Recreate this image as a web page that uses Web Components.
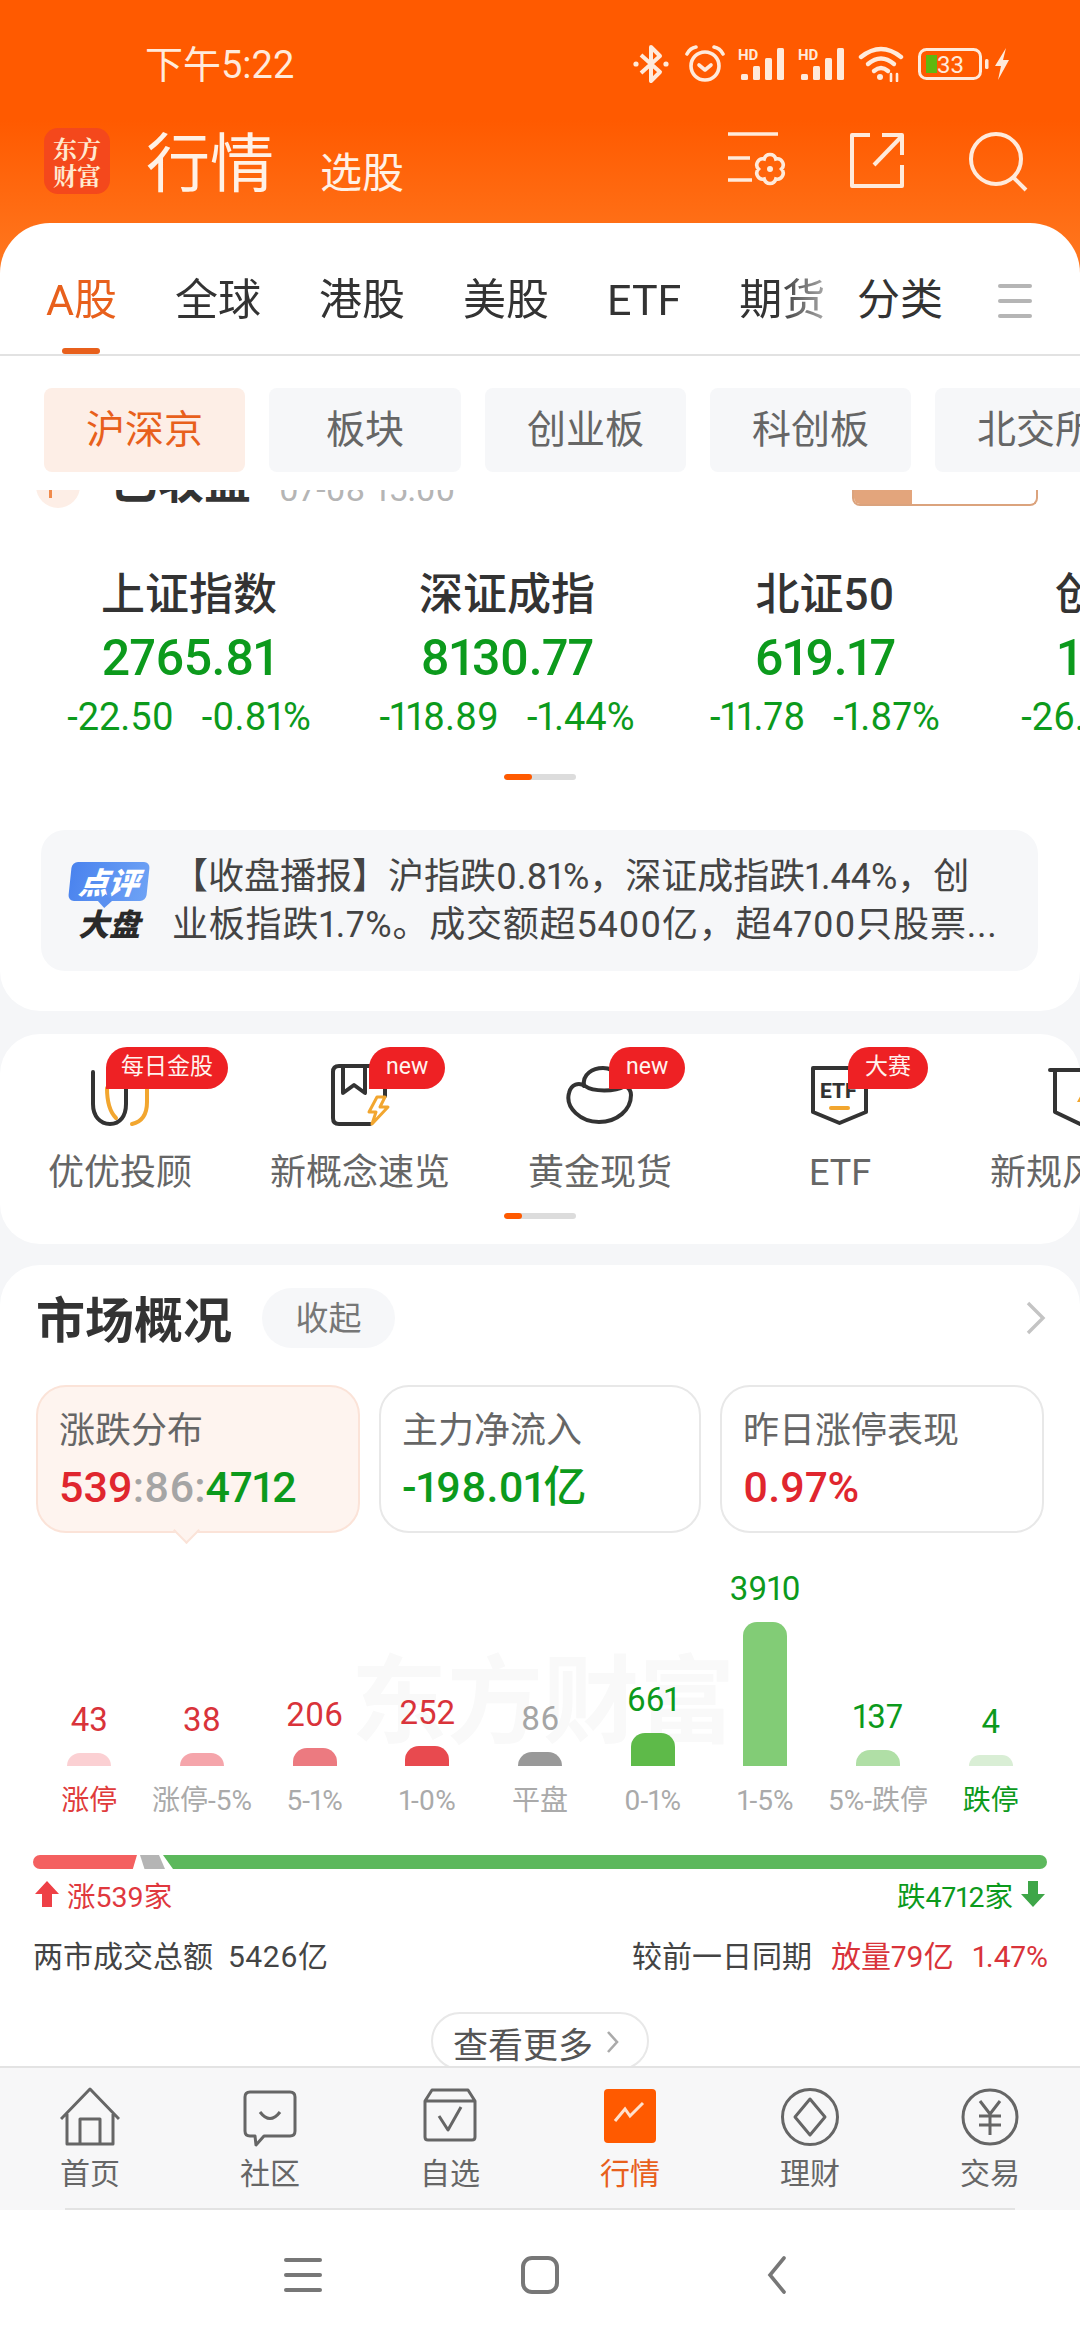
<!DOCTYPE html>
<html lang="zh">
<head>
<meta charset="utf-8">
<style>
  html, body { margin: 0; width: 1080px; height: 2340px; overflow: hidden; }
  body { font-family: Roboto, "Noto Sans CJK SC", sans-serif; color: #333; font-variant-numeric: proportional-nums; }
</style>
</head>
<body>
<market-app></market-app>

<script>
const RED = '#e0262e', GREEN = '#0c9a1c';

class StatusBar extends HTMLElement {
  constructor() { super(); this.attachShadow({ mode: 'open' }); }
  connectedCallback() {
    const signal = `<svg width="50" height="34" viewBox="0 0 50 34" fill="#ffeadb">
      <text x="0" y="13" font-size="15" font-weight="700" font-family="Roboto">HD</text>
      <rect x="3" y="27" width="7" height="6" rx="1.5"/><rect x="15" y="19" width="7" height="14" rx="1.5"/>
      <rect x="27" y="11" width="7" height="22" rx="1.5"/><rect x="39" y="1" width="7" height="32" rx="1.5"/></svg>`;
    this.shadowRoot.innerHTML = `
      <style>
        :host { display: flex; align-items: center; height: 128px; padding: 0 70px 0 145px; color: #ffeadb; }
        .time { font-size: 38px; flex: 1; padding-bottom: 6px; }
        .icons { display: flex; align-items: center; gap: 10px; }
      </style>
      <div class="time">下午5:22</div>
      <div class="icons">
        <svg width="36" height="40" viewBox="0 0 36 40" fill="none" stroke="#ffeadb" stroke-width="4" stroke-linejoin="round" style="margin-right:6px">
          <path d="M8 11 L27 28 L18 37 V3 L27 12 L8 29"/><circle cx="3" cy="20" r="2.6" fill="#ffeadb" stroke="none"/><circle cx="33" cy="20" r="2.6" fill="#ffeadb" stroke="none"/></svg>
        <svg width="40" height="38" viewBox="0 0 40 38" fill="none" stroke="#ffeadb" stroke-width="3.6" stroke-linecap="round" stroke-linejoin="round" style="margin-right:3px">
          <circle cx="20" cy="21" r="14"/><path d="M14 20 L20 25 L26 20"/><path d="M2 9 Q5 3 11 2 M38 9 Q35 3 29 2"/></svg>
        ${signal}
        ${signal}
        <svg width="46" height="36" viewBox="0 0 46 36" fill="none" stroke="#ffeadb" stroke-width="4.4" stroke-linecap="round" style="margin-right:4px">
          <path d="M3 11 Q23 -5 43 11"/><path d="M10 18 Q23 7 36 18"/><path d="M16 25 Q23 19 30 25"/><circle cx="22" cy="31" r="3" fill="#ffeadb" stroke="none"/>
          <path d="M33 28 V35 M39 28 V35" stroke-width="2.6"/></svg>
        <svg width="72" height="32" viewBox="0 0 72 32" fill="none">
          <rect x="1.5" y="1.5" width="61" height="29" rx="7" stroke="#ffeadb" stroke-width="3"/>
          <rect x="8" y="7" width="11" height="18" fill="#5fb80f"/>
          <text x="19" y="25" font-size="24" fill="#ffeadb" font-family="Roboto">33</text>
          <rect x="67" y="11" width="3.5" height="10" rx="1.5" fill="#ffeadb"/></svg>
        <svg width="16" height="32" viewBox="0 0 16 32" fill="#ffeadb" style="margin-left:-6px"><path d="M12 0 L1 18 H7 L4 32 L15 12 H9 Z"/></svg>
      </div>`;
  }
}

class AppHeader extends HTMLElement {
  constructor() { super(); this.attachShadow({ mode: 'open' }); }
  connectedCallback() {
    this.shadowRoot.innerHTML = `
      <style>
        :host { display: flex; align-items: flex-start; height: 95px; padding: 0 51px 0 44px; color: #fff1e6; }
        .logo { width: 66px; height: 66px; border-radius: 14px; background: #f4481c; color: #ffe9cf; font: 700 24px/27px "Noto Serif CJK SC", "Noto Sans CJK SC", sans-serif; text-align: center; padding-top: 6px; box-sizing: border-box; }
        .title { font-size: 64px; line-height: 66px; margin-left: 36px; padding-top: 4px; }
        .sub { font-size: 42px; line-height: 50px; margin: 21px 0 0 46px; flex: 1; }
        .icons { display: flex; gap: 62px; margin-top: 4px; }
        svg { display: block; }
      </style>
      <div class="logo">东方<br>财富</div>
      <div class="title">行情</div>
      <div class="sub">选股</div>
      <div class="icons">
        <svg width="60" height="56" viewBox="0 0 60 56" fill="none" stroke="#ffeadb" stroke-width="3.6">
          <path d="M0 2 H50 M0 26 H22 M0 48 H24"/>
          <path d="M53.5 37 A6 6 0 0 1 47.8 47 A6 6 0 0 1 36.2 47 A6 6 0 0 1 30.5 37 A6 6 0 0 1 36.2 27 A6 6 0 0 1 47.8 27 A6 6 0 0 1 53.5 37 Z"/>
          <circle cx="42" cy="37" r="3" fill="#ffeadb" stroke="none"/></svg>
        <svg width="54" height="56" viewBox="0 0 54 56" fill="none" stroke="#ffeadb" stroke-width="4" stroke-linejoin="round">
          <path d="M20 3 H2 V54 H52 V33"/><path d="M24 33 L51 5"/><path d="M32 3 H52 V23"/></svg>
        <svg width="60" height="60" viewBox="0 0 60 60" fill="none" stroke="#ffeadb" stroke-width="4" style="margin-left:3px">
          <circle cx="27" cy="27" r="25"/><path d="M45 46 L57 58"/></svg>
      </div>`;
  }
}

class MarketTabs extends HTMLElement {
  constructor() { super(); this.attachShadow({ mode: 'open' }); }
  connectedCallback() {
    const tabs = ['A股', '全球', '港股', '美股', 'ETF', '期货'];
    this.shadowRoot.innerHTML = `
      <style>
        :host { display: flex; height: 133px; border-bottom: 2px solid #e2e2e2; box-sizing: border-box; padding-left: 46px; font-size: 43px; color: #333; }
        .scroll { display: flex; gap: 58px; width: 794px; overflow: hidden; -webkit-mask-image: linear-gradient(90deg, #000 92%, rgba(0,0,0,.25) 100%); }
        .tab { position: relative; height: 131px; line-height: 154px; white-space: nowrap; flex: none; }
        .tab.on { color: #e8601c; }
        .tab.on::after { content: ""; position: absolute; left: 16px; bottom: 0; width: 38px; height: 6px; border-radius: 3px; background: #e8601c; }
        .more { line-height: 154px; margin-left: 17px; }
        svg { margin: 61px 0 0 55px; display: block; }
      </style>
      <div class="scroll">${tabs.map((t, i) => `<div class="tab ${i ? '' : 'on'}">${t}</div>`).join('')}</div>
      <div class="more">分类</div>
      <svg width="34" height="34" viewBox="0 0 34 34" fill="#b5b5b5"><rect y="0" width="34" height="4" rx="2"/><rect y="15" width="34" height="4" rx="2"/><rect y="30" width="34" height="4" rx="2"/></svg>`;
  }
}

class SubChips extends HTMLElement {
  constructor() { super(); this.attachShadow({ mode: 'open' }); }
  connectedCallback() {
    const chips = ['沪深京', '板块', '创业板', '科创板', '北交所'];
    this.shadowRoot.innerHTML = `
      <style>
        :host { display: flex; gap: 24px; padding: 32px 0 0 44px; overflow: hidden; }
        div { flex: none; height: 84px; line-height: 84px; min-width: 192px; box-sizing: border-box; padding: 0 42px; text-align: center; border-radius: 8px; background: #f6f7f9; color: #666; font-size: 39px; }
        .on { background: #fdeee6; color: #e8601c; }
      </style>
      ${chips.map((c, i) => `<div class="${i ? '' : 'on'}">${c}</div>`).join('')}`;
  }
}

// the "closed" row is scrolled most of the way under the chips
class ClosedRow extends HTMLElement {
  constructor() { super(); this.attachShadow({ mode: 'open' }); }
  connectedCallback() {
    this.shadowRoot.innerHTML = `
      <style>
        :host { display: flex; align-items: flex-end; height: 18px; margin-top: 18px; overflow: hidden; padding: 0 42px 0 36px; }
        .dot { width: 44px; height: 44px; border-radius: 50%; background: #fdeee6; flex: none; margin-right: 30px; position: relative; }
        .dot::after { content: ""; position: absolute; left: 13px; top: 26px; width: 3px; height: 8px; background: #f08a4b; }
        .t { font-size: 47px; font-weight: 700; line-height: 52px; color: #333; margin-bottom: 0; }
        .d { font-size: 34px; line-height: 40px; color: #b5b5b5; margin: 0 0 -1px 28px; flex: 1; }
        .tag { width: 186px; height: 30px; margin-bottom: 2px; display: flex; border-radius: 0 0 8px 8px; overflow: hidden; box-sizing: border-box; border: 2px solid #dba37d; border-top: 0; }
        .tag i { width: 58px; background: #e3a57c; }
      </style>
      <div class="dot"></div><div class="t">已收盘</div><div class="d">07-08 15:00</div><div class="tag"><i></i></div>`;
  }
}

class IndexCard extends HTMLElement {
  constructor() { super(); this.attachShadow({ mode: 'open' }); }
  connectedCallback() {
    this.shadowRoot.innerHTML = `
      <style>
        :host { display: block; flex: none; width: 318px; text-align: center; white-space: nowrap; }
        .n { font-size: 44px; font-weight: 500; line-height: 50px; color: #333; }
        .v { font-size: 50px; font-weight: 500; line-height: 60px; margin-top: 8px; color: ${GREEN}; letter-spacing: -.5px; }
        .s { font-size: 38px; line-height: 40px; margin-top: 9px; color: ${GREEN}; display: flex; justify-content: center; gap: 28px; }
      </style>
      <div class="n">${this.getAttribute('name')}</div>
      <div class="v">${this.getAttribute('value')}</div>
      <div class="s"><span>${this.getAttribute('diff')}</span><span>${this.getAttribute('pct')}</span></div>`;
  }
}

class ScrollDots extends HTMLElement {
  constructor() { super(); this.attachShadow({ mode: 'open' }); }
  connectedCallback() {
    this.shadowRoot.innerHTML = `
      <style>
        :host { display: block; width: 72px; height: 6px; border-radius: 3px; background: #dcdcdc; overflow: hidden; margin: 0 auto; }
        div { height: 100%; width: ${this.getAttribute('fill')}px; border-radius: 3px; background: #ff5a00; }
      </style><div></div>`;
  }
}

class NewsBrief extends HTMLElement {
  constructor() { super(); this.attachShadow({ mode: 'open' }); }
  connectedCallback() {
    this.shadowRoot.innerHTML = `
      <style>
        :host { display: flex; align-items: center; height: 141px; margin: 50px 42px 0 41px; background: #f6f7f9; border-radius: 24px; padding-left: 29px; }
        .badge { width: 78px; flex: none; text-align: center; }
        .bubble { position: relative; height: 39px; background: linear-gradient(100deg, #4a83ee, #6ea2f5); border-radius: 6px; transform: skewX(-6deg); color: #fff; font: italic 900 30px/39px "Noto Sans CJK SC", sans-serif; }
        .bubble::after { content: ""; position: absolute; left: 32px; bottom: -5px; width: 10px; height: 10px; background: #5a90f0; transform: rotate(45deg); }
        .big { font: italic 900 31px/34px "Noto Sans CJK SC", sans-serif; color: #2a2a2a; margin-top: 5px; }
        .txt { margin-left: 24px; width: 830px; font-size: 36px; line-height: 48px; color: #444; white-space: nowrap; }
      </style>
      <div class="badge"><div class="bubble">点评</div><div class="big">大盘</div></div>
      <div class="txt"><slot name="l1"></slot><br><span style="letter-spacing:.8px"><slot name="l2"></slot></span></div>`;
  }
}

class ShortcutItem extends HTMLElement {
  constructor() { super(); this.attachShadow({ mode: 'open' }); }
  connectedCallback() {
    const badge = this.getAttribute('badge');
    const left = this.getAttribute('badge-left');
    const pad = badge && badge.length > 3 ? 15 : 17;
    this.shadowRoot.innerHTML = `
      <style>
        :host { display: block; flex: none; width: 240px; text-align: center; position: relative; padding-top: 28px; }
        .icon { width: 70px; height: 70px; margin: 0 auto; }
        .lab { font-size: 36px; line-height: 48px; margin-top: 17px; color: #666; white-space: nowrap; }
        .b { position: absolute; top: 13px; left: ${left}px; height: 42px; line-height: 40px; padding: 0 ${pad}px; background: #ee2124; color: #fff3ee; font-size: 23px; border-radius: 21px 21px 21px 0; white-space: nowrap; }
      </style>
      <div class="icon"><slot></slot></div>
      <div class="lab">${this.getAttribute('label')}</div>
      ${badge ? `<div class="b">${badge}</div>` : ''}`;
  }
}

class MetricCard extends HTMLElement {
  constructor() { super(); this.attachShadow({ mode: 'open' }); }
  connectedCallback() {
    const on = this.hasAttribute('active');
    this.shadowRoot.innerHTML = `
      <style>
        :host { display: block; position: relative; height: 148px; box-sizing: border-box; padding: 20px 21px 0; border-radius: 30px; border: 2px solid ${on ? '#fbe3d8' : '#e8e8e8'}; background: ${on ? '#fef4ef' : '#fff'}; }
        .t { font-size: 36px; line-height: 48px; color: #666; }
        .v { font-size: 43px; line-height: 54px; font-weight: 500; margin-top: 5px; white-space: nowrap; }
        .car { position: absolute; left: 139px; bottom: -9px; width: 17px; height: 17px; background: #fef4ef; border: solid #fbe3d8; border-width: 0 2px 2px 0; transform: rotate(45deg); }
      </style>
      <div class="t">${this.getAttribute('title')}</div>
      <div class="v"><slot></slot></div>
      ${on ? '<div class="car"></div>' : ''}`;
  }
}

class BarCol extends HTMLElement {
  constructor() { super(); this.attachShadow({ mode: 'open' }); }
  connectedCallback() {
    const a = n => this.getAttribute(n);
    this.shadowRoot.innerHTML = `
      <style>
        :host { display: flex; flex-direction: column; align-items: center; justify-content: flex-end; white-space: nowrap; position: relative; }
        .v { font-size: 33px; line-height: 40px; margin-bottom: 13px; color: ${a('vc')}; }
        .b { width: 44px; height: ${a('h')}px; background: ${a('c')}; border-radius: 14px 14px 0 0; }
        .l { font-size: 28px; line-height: 40px; margin-top: 15px; color: ${a('lc') || '#aaa'}; }
      </style>
      <div class="v">${a('value')}</div><div class="b"></div><div class="l">${a('label')}</div>`;
  }
}

class MarketOverview extends HTMLElement {
  constructor() { super(); this.attachShadow({ mode: 'open' }); }
  connectedCallback() {
    const G = GREEN, R = '#d9333a', K = '#a5a5a5';
    const bars = [
      ['43', 13, '#fbd0d3', R, '涨停', '#e03b3b'], ['38', 13, '#f5a5ab', R, '涨停-5%'], ['206', 18, '#ec7a80', R, '5-1%'],
      ['252', 20, '#e84a4f', R, '1-0%'], ['86', 14, '#999', K, '平盘'], ['661', 33, '#5eba49', G, '0-1%'],
      ['3910', 144, '#82cc76', G, '1-5%'], ['137', 16, '#b0dfa6', G, '5%-跌停'], ['4', 11, '#d9eed5', G, '跌停', G]
    ];
    this.shadowRoot.innerHTML = `
      <style>
        :host { display: block; background: #fff; border-radius: 40px 40px 0 0; margin-top: 21px; padding-top: 23px; }
        .head { display: flex; align-items: center; height: 60px; padding: 0 34px 0 36px; }
        .h { font-size: 49px; font-weight: 700; color: #333; margin-top: -4px; }
        .pill { margin-left: 30px; height: 60px; line-height: 62px; width: 133px; text-align: center; border-radius: 30px; background: #f6f7f9; color: #777; font-size: 33px; }
        .chev { margin-left: auto; }
        .metrics { display: grid; grid-template-columns: 324px 322px 324px; gap: 19px; padding-left: 36px; margin-top: 37px; }
        .chart { position: relative; display: grid; grid-template-columns: repeat(9, 1fr); margin: 36px 33px 0; height: 252px; }
        .wm { position: absolute; left: 318px; top: 78px; font-size: 96px; font-weight: 700; line-height: 110px; color: #f9f9f9; white-space: nowrap; }
        .dist { display: flex; margin: 34px 33px 0; height: 14px; }
        .dist i { display: block; height: 14px; }
        .d1 { width: 104px; background: #f46060; border-radius: 7px 0 0 7px; clip-path: polygon(0 0, 100% 0, 96% 100%, 0 100%); }
        .d2 { width: 25px; margin-left: 3px; background: #b5b5b5; clip-path: polygon(0 0, 76% 0, 100% 100%, 18% 100%); }
        .d3 { flex: 1; margin-left: -2px; background: #5cb85c; border-radius: 0 7px 7px 0; clip-path: polygon(0 0, 100% 0, 100% 100%, 10px 100%); }
        .counts { display: flex; justify-content: space-between; align-items: center; margin: 7px 35px 0; height: 36px; font-size: 28.5px; }
        .counts span { display: flex; align-items: center; gap: 8px; }
        .stats { display: flex; justify-content: space-between; margin: 25px 32px 0 33px; font-size: 30px; line-height: 40px; color: #444; }
        .stats b { font-weight: 400; color: ${R}; margin-left: 19px; }
        .more { width: 218px; height: 58px; margin: 35px auto 0; padding: 2px 0 0 20px; box-sizing: border-box; border: 2px solid #e8e8e8; border-radius: 29px; font-size: 35px; color: #555; display: flex; align-items: center; gap: 14px; }
      </style>
      <div class="head">
        <div class="h">市场概况</div><div class="pill">收起</div>
        <svg class="chev" width="20" height="34" viewBox="0 0 20 34" fill="none" stroke="#c4c4c4" stroke-width="3.4"><path d="M2 2 L17 17 L2 32"/></svg>
      </div>
      <div class="metrics">
        <metric-card title="涨跌分布" active><span style="color:${RED}">539</span><span style="color:#a5a5a5">:86:</span><span style="color:${G}">4712</span></metric-card>
        <metric-card title="主力净流入"><span style="color:${G}">-198.01亿</span></metric-card>
        <metric-card title="昨日涨停表现"><span style="color:${RED}">0.97%</span></metric-card>
      </div>
      <div class="chart">
        <div class="wm">东方财富</div>
        ${bars.map(b => `<bar-col value="${b[0]}" h="${b[1]}" c="${b[2]}" vc="${b[3]}" label="${b[4]}" ${b[5] ? `lc="${b[5]}"` : ''}></bar-col>`).join('')}
      </div>
      <div class="dist"><i class="d1"></i><i class="d2"></i><i class="d3"></i></div>
      <div class="counts">
        <span style="color:#e0383e"><svg width="24" height="26" viewBox="0 0 24 26" fill="#ee4046"><path d="M12 0 L24 13 H17 V26 H7 V13 H0 Z"/></svg>涨539家</span>
        <span style="color:${G}">跌4712家<svg width="24" height="26" viewBox="0 0 24 26" fill="#3ea648"><path d="M12 26 L24 13 H17 V0 H7 V13 H0 Z"/></svg></span>
      </div>
      <div class="stats">
        <div>两市成交总额&nbsp;&nbsp;<span style="letter-spacing:.6px">5426亿</span></div>
        <div>较前一日同期<b>放量79亿</b><b>1.47%</b></div>
      </div>
      <div class="more">查看更多<svg width="12" height="24" viewBox="0 0 12 24" fill="none" stroke="#aaa" stroke-width="2.6"><path d="M1 2 L10 12 L1 22"/></svg></div>`;
  }
}

class TabItem extends HTMLElement {
  constructor() { super(); this.attachShadow({ mode: 'open' }); }
  connectedCallback() {
    const on = this.hasAttribute('active');
    this.shadowRoot.innerHTML = `
      <style>
        :host { display: block; text-align: center; padding-top: 19px; }
        .i { width: 60px; height: 60px; margin: 0 auto; }
        .l { font-size: 30px; line-height: 40px; margin-top: 7px; color: ${on ? '#e8601c' : '#666'}; }
      </style>
      <div class="i"><slot></slot></div><div class="l">${this.getAttribute('label')}</div>`;
  }
}

class BottomTabs extends HTMLElement {
  constructor() { super(); this.attachShadow({ mode: 'open' }); }
  connectedCallback() {
    this.shadowRoot.innerHTML = `
      <style>
        :host { display: block; flex: none; position: relative; height: 144px; box-sizing: border-box; background: #f7f7f8; border-top: 2px solid #e3e3e3; }
        .row { display: grid; grid-template-columns: repeat(6, 180px); }
        .line { position: absolute; left: 65px; right: 65px; bottom: 0; height: 2px; background: #e3e3e3; }
      </style>
      <div class="row"><slot></slot></div><div class="line"></div>`;
  }
}

class NavBar extends HTMLElement {
  constructor() { super(); this.attachShadow({ mode: 'open' }); }
  connectedCallback() {
    this.shadowRoot.innerHTML = `
      <style>
        :host { flex: none; display: grid; grid-template-columns: repeat(3, 237px); justify-content: center; justify-items: center; align-items: center; height: 130px; padding-bottom: 0; background: #fff; }
      </style>
      <svg width="38" height="34" viewBox="0 0 38 34" fill="#777"><rect width="38" height="4" rx="2"/><rect y="15" width="38" height="4" rx="2"/><rect y="30" width="38" height="4" rx="2"/></svg>
      <svg width="38" height="38" viewBox="0 0 38 38" fill="none" stroke="#777" stroke-width="4"><rect x="2" y="2" width="34" height="34" rx="9"/></svg>
      <svg width="22" height="38" viewBox="0 0 22 38" fill="none" stroke="#777" stroke-width="3.6" stroke-linecap="round"><path d="M18 2 L4 19 L18 36"/></svg>`;
  }
}

class MarketApp extends HTMLElement {
  constructor() { super(); this.attachShadow({ mode: 'open' }); }
  connectedCallback() {
    const D = '#333', O = '#f2a62f';
    const item = (label, badge, left, svg) => `<shortcut-item label="${label}" badge="${badge}" badge-left="${left}">${svg}</shortcut-item>`;
    const svg70 = s => `<svg width="70" height="70" viewBox="0 0 70 70" fill="none" stroke-width="4" stroke-linecap="round" stroke-linejoin="round">${s}</svg>`;
    const tabSvg = s => `<svg width="60" height="60" viewBox="0 0 60 60" fill="none" stroke="#666" stroke-width="3" stroke-linejoin="round">${s}</svg>`;
    this.shadowRoot.innerHTML = `
      <style>
        :host { display: flex; flex-direction: column; height: 2340px; background: linear-gradient(#ff5a00 0, #ff5a00 120px, #ff7a22 280px, #fff 280px); }
        .sheet { flex: 1; min-height: 0; display: flex; flex-direction: column; background: #fff; border-radius: 50px 50px 0 0; overflow: hidden; }
        .view { flex: 1; min-height: 0; overflow: hidden; background: #f5f6f8; }
        .c1 { background: #fff; border-radius: 0 0 40px 40px; height: 539px; overflow: hidden; }
        .idx { display: flex; padding: 62px 0 0 30px; overflow: hidden; }
        .c2 { background: #fff; border-radius: 40px; height: 210px; margin-top: 23px; }
        .sc { display: flex; overflow: hidden; height: 169px; }
      </style>
      <status-bar></status-bar>
      <app-header></app-header>
      <div class="sheet">
        <market-tabs></market-tabs>
        <sub-chips></sub-chips>
        <div class="view">
          <div class="c1">
            <closed-row></closed-row>
            <div class="idx">
              <index-card name="上证指数" value="2765.81" diff="-22.50" pct="-0.81%"></index-card>
              <index-card name="深证成指" value="8130.77" diff="-118.89" pct="-1.44%"></index-card>
              <index-card name="北证50" value="619.17" diff="-11.78" pct="-1.87%"></index-card>
              <index-card name="创业板指" value="1595.91" diff="-26.80" pct="-1.65%"></index-card>
            </div>
            <scroll-dots fill="28" style="margin-top:37px"></scroll-dots>
            <news-brief><span slot="l1">【收盘播报】沪指跌0.81%，深证成指跌1.44%，创</span><span slot="l2">业板指跌1.7%。成交额超5400亿，超4700只股票...</span></news-brief>
          </div>
          <div class="c2">
            <div class="sc">
              ${item('优优投顾', '每日金股', 106, svg70(`<path d="M8 10 V42 C8 54 15 62 25 62 C35 62 41 54 41 42 V26" stroke="${D}"/><path d="M22 26 C22 40 25 50 31 56" stroke="${O}"/><path d="M62 26 V40 C62 54 56 60 47 62" stroke="${O}"/>`))}
              ${item('新概念速览', 'new', 129, svg70(`<path d="M60 34 V10 Q60 4 54 4 H14 Q8 4 8 10 V56 Q8 62 14 62 H45" stroke="${D}"/><path d="M18 4 V31 L29 23 L40 31 V4" stroke="${D}"/><path d="M52 35 L44 50 H51 L47 62 L63 45 H55 L60 35 Z" stroke="${O}" stroke-width="3"/>`))}
              ${item('黄金现货', 'new', 129, svg70(`<path d="M19 24 C17 12 28 6 38 6 C46 6 50 10 52 14" stroke="${D}"/><path d="M4 31 C6 22 14 20 20 24 C28 30 50 30 60 24 C64 26 66 28 66 33 C66 48 52 60 34 60 C16 60 0 46 4 31 Z" stroke="${D}"/>`))}
              ${item('ETF', '大赛', 128, svg70(`<path d="M8 6 H61 V50 L34.5 61 L8 50 Z" stroke="${D}"/><text x="15" y="36" font-size="21" font-weight="800" fill="${D}" stroke="none" font-family="Roboto">ETF</text><path d="M26 46 H43" stroke="${O}"/>`))}
              ${item('新规风险股', '', 0, svg70(`<path d="M5 8 H65 M10 8 V50 L35 62 L60 50 V8" stroke="${D}"/><path d="M42 22 L32 40 H40 L36 52 L50 34 H42 L46 22 Z" fill="${O}" stroke="none"/>`))}
            </div>
            <scroll-dots fill="18" style="margin-top:10px"></scroll-dots>
          </div>
          <market-overview></market-overview>
        </div>
        <bottom-tabs>
          <tab-item label="首页">${tabSvg('<path d="M1 32 L30 2 L59 32 M7 27 V57 H53 V27 M20 57 V32 H40 V57"/>')}</tab-item>
          <tab-item label="社区">${tabSvg('<path d="M10 5 H50 Q55 5 55 10 V44 Q55 49 50 49 H24 L16 58 L15 49 H10 Q5 49 5 44 V10 Q5 5 10 5 Z"/><path d="M20 25 Q30 38 40 25"/>')}</tab-item>
          <tab-item label="自选">${tabSvg('<path d="M5 14 L12 3 H48 L55 14 V50 Q55 53 52 53 H8 Q5 53 5 50 Z M5 14 H55"/><path d="M19 29 L28 43 L41 20"/>')}</tab-item>
          <tab-item label="行情" active><svg width="60" height="60" viewBox="0 0 60 60" fill="none"><rect x="4" y="2" width="52" height="54" rx="4" fill="#ff5a00"/><path d="M15 34 L25 22 L30 29 L43 16" stroke="#ffe0cc" stroke-width="3"/></svg></tab-item>
          <tab-item label="理财">${tabSvg('<circle cx="30" cy="30" r="27.5"/><path d="M30 12 L45 30 L30 48 L15 30 Z"/>')}</tab-item>
          <tab-item label="交易">${tabSvg('<circle cx="30" cy="30" r="27"/><path d="M20 14 L30 27 L40 14 M19 29 H41 M19 38 H41 M30 27 V48"/>')}</tab-item>
        </bottom-tabs>
        <nav-bar></nav-bar>
      </div>`;
  }
}

customElements.define('status-bar', StatusBar);
customElements.define('app-header', AppHeader);
customElements.define('market-tabs', MarketTabs);
customElements.define('sub-chips', SubChips);
customElements.define('closed-row', ClosedRow);
customElements.define('index-card', IndexCard);
customElements.define('scroll-dots', ScrollDots);
customElements.define('news-brief', NewsBrief);
customElements.define('shortcut-item', ShortcutItem);
customElements.define('metric-card', MetricCard);
customElements.define('bar-col', BarCol);
customElements.define('market-overview', MarketOverview);
customElements.define('tab-item', TabItem);
customElements.define('bottom-tabs', BottomTabs);
customElements.define('nav-bar', NavBar);
customElements.define('market-app', MarketApp);
</script>
</body>
</html>
